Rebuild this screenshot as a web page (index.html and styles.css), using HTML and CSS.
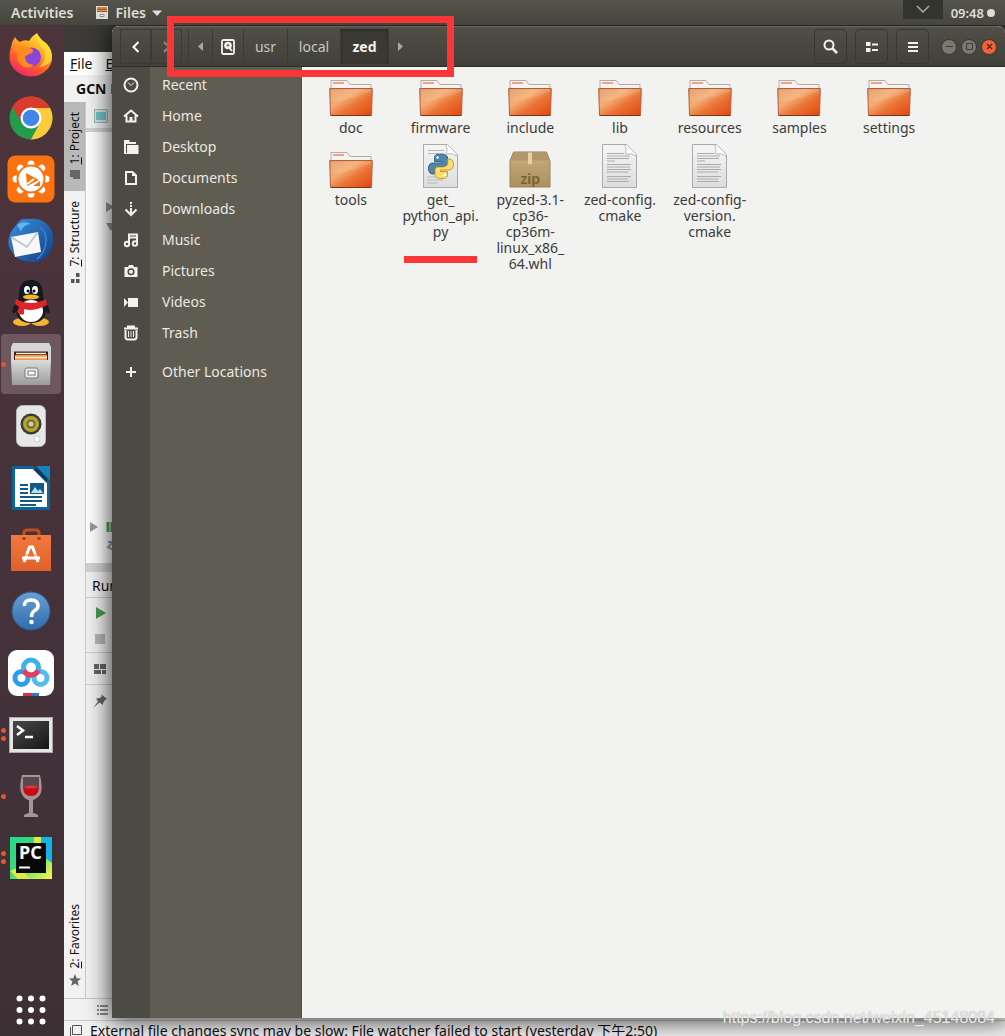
FILE: index.html
```html
<!DOCTYPE html>
<html lang="en">
<head>
<meta charset="utf-8">
<title>Files</title>
<link rel="stylesheet" href="styles.css">
</head>
<body>
<svg width="0" height="0" class="defs" aria-hidden="true">
  <defs>
    <linearGradient id="fold" x1="0" y1="0" x2="1" y2="1"><stop offset="0" stop-color="#e3935f"/><stop offset=".35" stop-color="#f3ad72"/><stop offset=".6" stop-color="#ea7335"/><stop offset="1" stop-color="#e2460f"/></linearGradient>
    <linearGradient id="page" x1="0" y1="0" x2="0" y2="1"><stop offset="0" stop-color="#f6f6f6"/><stop offset="1" stop-color="#dcdddd"/></linearGradient>
    <linearGradient id="box" x1="0" y1="0" x2="0" y2="1"><stop offset="0" stop-color="#c9ad7c"/><stop offset="1" stop-color="#ad905f"/></linearGradient>
    <linearGradient id="fox" x1=".8" y1="0" x2=".3" y2="1"><stop offset="0" stop-color="#fff04a"/><stop offset=".4" stop-color="#ffa51f"/><stop offset=".7" stop-color="#ff5a2c"/><stop offset="1" stop-color="#f0256c"/></linearGradient>
    <linearGradient id="bird" x1="0" y1="0" x2="1" y2="1"><stop offset="0" stop-color="#3a90dd"/><stop offset="1" stop-color="#123d84"/></linearGradient>
    <linearGradient id="metal" x1="0" y1="0" x2="0" y2="1"><stop offset="0" stop-color="#dcdcdc"/><stop offset="1" stop-color="#9b9b9b"/></linearGradient>
    <linearGradient id="bag" x1="0" y1="0" x2="0" y2="1"><stop offset="0" stop-color="#f07a40"/><stop offset="1" stop-color="#e0602a"/></linearGradient>
    <linearGradient id="help" x1="0" y1="0" x2="0" y2="1"><stop offset="0" stop-color="#6aa0d6"/><stop offset="1" stop-color="#2f6cab"/></linearGradient>
    <linearGradient id="term" x1="0" y1="0" x2="1" y2="1"><stop offset="0" stop-color="#4a4a4a"/><stop offset="1" stop-color="#161616"/></linearGradient>
    <linearGradient id="pc" x1="0" y1="0" x2="1" y2="1"><stop offset="0" stop-color="#21d789"/><stop offset=".45" stop-color="#3fd87c"/><stop offset="1" stop-color="#fcf84a"/></linearGradient>
    <symbol id="folder" viewBox="0 0 44 44">
      <path d="M2 14V8.500H18l3 4H42v6H2z" fill="#f5f3f1" stroke="#b9aaa4"/>
      <path d="M4 11H15" stroke="#e8896a" stroke-width="1.500"/>
      <path d="M.7 16.500H43.300L42.500 43.500H1.500z" fill="url(#fold)" stroke="#b06040"/>
      <path d="M2 30Q24 27 42.500 19V17.500H2z" fill="#fff" opacity=".12"/>
      <path d="M2 43.500H42" stroke="#7a3518"/>
    </symbol>
    <symbol id="doc" viewBox="0 0 44 44">
      <path d="M4.500.5H28L38.500 11V43.500H4.500z" fill="url(#page)" stroke="#aaa"/>
      <path d="M27 1Q29 6 27.500 10Q33 8.500 38 12L38.500 10.500L28.500.5z" fill="#fff" stroke="#aaa" stroke-width=".8"/>
      <path d="M9 9.500H26M9 12H32M9 14.500H31M9 17H17M9 20.500H33M9 23H32M9 25.500H33M9 28H30M9 32.500H33M9 35H30M9 37.500H31" stroke="#aaabab" stroke-width="1.200"/>
    </symbol>
    <symbol id="python" viewBox="0 0 44 44">
      <path d="M4.500.5H28L38.500 11V43.500H4.500z" fill="url(#page)" stroke="#aaa"/>
      <path d="M27 1Q29 6 27.500 10Q33 8.500 38 12L38.500 10.500L28.500.5z" fill="#fff" stroke="#aaa" stroke-width=".8"/>
      <path d="M9 6.500H25M9 9.500H19M8 33H19M8 36H24M8 39H19" stroke="#bbb"/>
      <g transform="translate(-1)">
      <path d="M22.500 10C17 10 16.500 12 16.500 14V17.500H23.500V19H14.500C11.500 19 10.500 22 10.500 24.500C10.500 28 12 30 14.500 30H16.500V26.500C16.500 24 18.500 22.500 21 22.500H26.500C28.500 22.500 29.500 21 29.500 19V14C29.500 11 27 10 22.500 10z" fill="#4f86ad" stroke="#35627f"/>
      <path d="M23.500 34.500C29 34.500 29.500 32 29.500 30.500V27.500H22.500V26H31.500C34.500 26 35.500 23 35.500 20.500C35.500 17 34 15 31.500 15H29.800V19C29.800 21.500 27.500 23 25 23H20C18 23 17 24.500 17 26.500V31C17 33.500 19.500 34.500 23.500 34.500z" fill="#fbdf6c" stroke="#c29b30"/>
      <circle cx="19.500" cy="13.500" r="1.200" fill="#fff"/><circle cx="26.500" cy="31" r="1.200" fill="#fff"/>
      </g>
    </symbol>
    <symbol id="zip" viewBox="0 0 44 44">
      <path d="M5.500 8H38.500L42 17V43H2V17z" fill="url(#box)" stroke="#9c8154"/>
      <path d="M2.500 16.500H41.500L38.500 8.500H5.500z" fill="#b3976a"/>
      <path d="M20 8.500H24V20.500L22 19.500L20 20.500z" fill="#e3d2ae"/>
    </symbol>
  </defs>
</svg>

<div class="screen">
  <header class="topbar">
    <button class="top-item activities">Activities</button>
    <button class="top-item app-menu">
      <svg width="14" height="15" viewBox="0 0 14 15"><path d="M1 1H13V14H1z" fill="#ddd"/><path d="M2 2H12V7H2z" fill="#6b3a1d"/><path d="M2 3H12M2 5.500H12" stroke="#f0a050" stroke-width="1.500"/><path d="M5 9.500H9V11.500H5z" fill="#fff" stroke="#888"/></svg>
      Files
      <svg width="10" height="6" viewBox="0 0 10 6"><path d="M0 .5H10L5 6z" fill="#ddd"/></svg>
    </button>
    <div class="clock">09:48 <i class="status-dot"></i></div>
  </header>

  <div class="workspace">
    <nav class="dock" aria-label="Dock">
      <ul>
        <li><svg width="46" height="46" viewBox="0 0 46 46"><path d="M3 14Q4 8 7 4Q9 8 12 9Q16 6 21 8Q24 3 29 0Q32 7 38 10Q45 17 44 27A21.500 20 0 0 1 1.500 26Q1 20 3 14z" fill="url(#fox)"/><circle cx="23.500" cy="24" r="9.500" fill="#8a45d8"/><path d="M5 15Q13 11 22 15Q27 17 24 20Q18 22 17 24Q17 31 26 32Q20 37 13 32Q7 27 10 20z" fill="#ff8a20"/><path d="M29 1Q30 12 36 17Q39 28 31 34Q44 32 44 23Q43 13 35 8z" fill="#ffe034" opacity=".75"/></svg></li>
        <li><svg width="44" height="44" viewBox="0 0 44 44"><circle cx="22" cy="22" r="21.500" fill="#249b4d"/><path d="M22 22L3.400 11.300A21.500 21.500 0 0 1 40.600 11.300L41 12H22z" fill="#d93b2d"/><path d="M22 12H41A21.500 21.500 0 0 1 22 43.500L31 27z" fill="#fdcb3a"/><path d="M3.400 11.300L13.400 27 22 12H41A21.500 21.500 0 0 0 3.400 11.300z" fill="#d93b2d"/><circle cx="22" cy="22" r="10.500" fill="#fff"/><circle cx="22" cy="22" r="8.300" fill="#4285e8"/></svg></li>
        <li><svg width="48" height="48" viewBox="0 0 48 48"><rect x=".5" y=".5" width="47" height="47" rx="8" fill="#fb7210"/><g stroke="#fff" stroke-width="7" stroke-linecap="round"><path d="M24 9V39M9 24H39M13.300 13.300L34.700 34.700M34.700 13.300L13.300 34.700"/></g><circle cx="24" cy="24" r="14.500" fill="#fb7210"/><circle cx="24" cy="24" r="12.500" fill="#fff"/><path d="M19 18L32 25L20 31zM26 31L33 26V31z" fill="#fb7210"/><path d="M20 29L27 24" stroke="#fff" stroke-width="2"/></svg></li>
        <li><svg width="48" height="48" viewBox="0 0 48 48"><path d="M10 7Q13 1 22 2Q38 0 45 14Q49 28 41 38Q34 46 25 45Q11 45 4 34Q-1 27 3 17Q6 11 10 7z" fill="url(#bird)"/><path d="M10 8Q16 3 24 7Q17 7 14 14z" fill="#61b6f2"/><path d="M4 20L31 15L34 35L8 40z" fill="#f6f8fa"/><path d="M4 20L20 30L31 15" fill="none" stroke="#b9c0c8" stroke-width="1.500"/><path d="M33 10Q40 16 39 25Q38 36 30 42" fill="none" stroke="#3a86c8" stroke-width="1.500"/></svg></li>
        <li><svg width="42" height="48" viewBox="0 0 42 48"><ellipse cx="12" cy="43" rx="9" ry="4" fill="#f5b52d"/><ellipse cx="30" cy="43" rx="9" ry="4" fill="#f5b52d"/><path d="M21 1C10 1 9 10 9 18L3 29Q1 37 6 33Q8 44 21 44T36 33Q41 37 39 29L33 18C33 10 32 1 21 1z" fill="#161a20"/><ellipse cx="21" cy="32" rx="12" ry="11" fill="#fff"/><path d="M6 20Q21 28 36 20L37 26Q24 33 14 30V35Q10 37 7 33L9 28L5 25z" fill="#df2528"/><ellipse cx="17" cy="11" rx="3" ry="4" fill="#fff"/><ellipse cx="25" cy="11" rx="3" ry="4" fill="#fff"/><circle cx="18" cy="12" r="1.500"/><circle cx="24" cy="12" r="1.500"/><ellipse cx="21" cy="18" rx="8" ry="2.500" fill="#f5b52d"/></svg></li>
        <li class="running active"><svg width="42" height="44" viewBox="0 0 42 44"><path d="M3 1H39L41 5V19H1V5z" fill="#d5d5d5"/><path d="M4 9.500H38V19H4z" fill="#3c2216"/><path d="M5 13H37V19H5z" fill="#f29a4c"/><path d="M6 11.500H36M5 15.500H37" stroke="#ffe8cc" stroke-width="1.500"/><path d="M1 18H41L40 43H2z" fill="url(#metal)"/><rect x="15" y="26" width="13" height="10" rx="2" fill="#eee" stroke="#777"/><rect x="18" y="29" width="7" height="4" fill="#fff" stroke="#777"/></svg></li>
        <li><svg width="30" height="42" viewBox="0 0 30 42"><rect x=".5" y=".5" width="29" height="41" rx="6" fill="#e6e7e7" stroke="#bbb"/><circle cx="15" cy="19" r="10.500" fill="#3b3c3a"/><circle cx="15" cy="19" r="8" fill="#b5a52d"/><circle cx="15" cy="19" r="4.500" fill="#716b28"/><circle cx="15" cy="19" r="2.500" fill="#d7c6c6"/><circle cx="21" cy="34" r="3" fill="#fafafa" stroke="#ccc"/></svg></li>
        <li><svg width="40" height="46" viewBox="0 0 40 46"><path d="M1 1H22L39 17V45H1z" fill="#0c649d"/><path d="M25 1H39V16z" fill="#1482bd"/><path d="M4 4H22L36 18V42H4z" fill="#fff"/><path d="M22 4L36 18V13L27 4z" fill="#093f66"/><path d="M9 20H17M9 24H17M9 28H17M9 32H31M9 36H31M9 40H25" stroke="#145a85" stroke-width="2"/><rect x="19" y="18" width="14" height="11" fill="#145a85"/><path d="M20 28L24 22L27 26L29 24L32 28z" fill="#b8e2f2"/></svg></li>
        <li><svg width="42" height="44" viewBox="0 0 42 44"><path d="M14 9V5Q14 2 17 2H26Q29 2 29 5V9" fill="none" stroke="#c24d20" stroke-width="3"/><path d="M1 7H41V43H1z" fill="url(#bag)"/><path d="M14 9V12M29 9V12" stroke="#a73f18" stroke-width="3"/><path d="M14 34L19.500 19H22.500L28 34M12 30H30" fill="none" stroke="#fff" stroke-width="3"/><path d="M12 27H30" stroke="#ea6f38"/></svg></li>
        <li><svg width="40" height="40" viewBox="0 0 40 40"><circle cx="20" cy="20" r="19" fill="url(#help)" stroke="#315c8c"/><path d="M13.500 15Q13 9 20 9Q27 9 27 15Q27 18 23 20Q20.500 22 20.500 26" fill="none" stroke="#fff" stroke-width="3.500"/><circle cx="20.500" cy="31" r="2.300" fill="#fff"/></svg></li>
        <li><svg width="48" height="48" viewBox="0 0 48 48"><rect x="1" y="1" width="46" height="46" rx="9" fill="#fff"/><g fill="none" stroke-width="5"><circle cx="14.500" cy="29" r="6.500" stroke="#2a9df0"/><circle cx="33.500" cy="29" r="6.500" stroke="#55b9f3"/><circle cx="24" cy="18.500" r="7.500" stroke="#3db0ea"/><path d="M17 21.500Q19 26 24 26T31 21.500" stroke="#e93b55"/></g><path d="M16 44H24V47H16z" fill="#df2c44"/><path d="M24 44H32V47H24z" fill="#2a78d0"/></svg></li>
        <li class="running two"><svg width="44" height="36" viewBox="0 0 44 36"><rect x=".5" y=".5" width="43" height="35" fill="#e5e5e5" stroke="#aaa"/><rect x="4" y="4" width="36" height="28" fill="url(#term)"/><path d="M8 9L14 13.500L8 18M16 20H24" fill="none" stroke="#fff" stroke-width="2.500"/></svg></li>
        <li class="running"><svg width="26" height="46" viewBox="0 0 26 46"><path d="M4 2H22Q26 20 20 24Q17 27 15 27V40Q21 41 20 44H6Q5 41 11 40V27Q8 27 5 23Q0 17 4 2z" fill="#b5a6a9" opacity=".85"/><path d="M5 4H21V14H5z" fill="#5b484c"/><path d="M5 14H21Q21 23 13 23T5 14z" fill="#c50b15"/><path d="M5 14Q13 11 21 14Q13 17 5 14z" fill="#e6323a"/></svg></li>
        <li class="running two"><svg width="42" height="42" viewBox="0 0 42 42"><path d="M0 0H42V42H0z" fill="url(#pc)"/><path d="M30 0H42V26L34 20z" fill="#12b4ea"/><path d="M24 0H31V7H24zM0 34L10 30L20 42H8z" fill="#dcec45"/><path d="M6 6H36V36H6z" fill="#080808"/><path d="M9 30.500H20" stroke="#fff" stroke-width="2"/></svg><b class="pc-text">PC</b></li>
      </ul>
      <button class="show-apps" aria-label="Show Applications"><svg width="30" height="30" viewBox="0 0 30 30"><path d="M3.500 3.500h.01M15 3.500h.01M26.500 3.500h.01M3.500 15h.01M15 15h.01M26.500 15h.01M3.500 26.500h.01M15 26.500h.01M26.500 26.500h.01" stroke="#fff" stroke-width="6" stroke-linecap="round"/></svg></button>
    </nav>

    <main class="desktop">
      <section class="ide" aria-label="Editor">
        <div class="ide-title"></div>
        <div class="ide-menu"><span><u>F</u>ile</span><span><u>E</u>dit</span></div>
        <div class="ide-nav">GCN Model</div>
        <div class="ide-body">
          <div class="stripe">
            <button class="tab selected"><span><u>1</u>: Project</span><svg width="10" height="9" viewBox="0 0 10 9"><path d="M0 0H10V9H3V7H0z" fill="#666"/></svg></button>
            <button class="tab"><span><u>7</u>: Structure</span><svg width="10" height="10" viewBox="0 0 10 10"><path d="M6 0h3.500v4H6zM1 6h3.500v4H1zM6 6h3.500v4H6z" fill="#555"/></svg></button>
            <button class="tab last"><span><u>2</u>: Favorites</span><svg width="12" height="12" viewBox="0 0 12 12"><path d="M6 0L7.700 4.200 12 4.500 8.700 7.300 9.800 12 6 9.400 2.200 12 3.300 7.300 0 4.500 4.300 4.200z" fill="#666"/></svg></button>
          </div>
          <div class="panels">
            <div class="panel-head"><svg width="14" height="14" viewBox="0 0 14 14"><path d="M.5.5H13.500V13.500H.5z" fill="#d5e6ea" stroke="#a0b4ba"/><path d="M2 3H12V11H2z" fill="#73c4cf"/></svg></div>
            <div class="tree">
              <svg class="branches" width="8" height="30" viewBox="0 0 8 30"><path d="M0 0L8 5L0 10zM0 21H10L5 29z" fill="#999"/></svg>
              <svg class="libs" width="26" height="32" viewBox="0 0 26 32"><path d="M2 3L10 8L2 13z" fill="#999"/><path d="M20 3V13M24 3V13" stroke="#4da45a" stroke-width="3"/><path d="M20 23H25L20 28L25 31" fill="none" stroke="#8aa" stroke-width="2"/></svg>
            </div>
            <div class="splitter"></div>
            <div class="run">
              <div class="run-head">Run:</div>
              <div class="run-tools">
                <div><svg width="11" height="12" viewBox="0 0 11 12"><path d="M1 0L11 6L1 12z" fill="#499c54"/></svg></div>
                <div><svg width="10" height="10" viewBox="0 0 10 10"><path d="M0 0H10V10H0z" fill="#b8b8b8"/></svg></div>
                <div class="ruled"><svg width="12" height="10" viewBox="0 0 12 10"><path d="M0 0H5V5H0zM6 0H12V5H6zM0 6H7V10H0zM8 6H12V10H8z" fill="#666"/></svg></div>
                <div class="ruled"><svg width="14" height="14" viewBox="0 0 14 14"><path d="M8 0L14 5L12 6L10 9V11L6.500 8.500L0 14L5 7.500L3 4.500L7 4L9 2z" fill="#666"/></svg></div>
              </div>
            </div>
          </div>
        </div>
        <div class="ide-strip"><svg width="11" height="10" viewBox="0 0 11 10"><path d="M0 1H2M3 1H11M0 5H2M3 5H11M0 9H2M3 9H11" stroke="#666" stroke-width="1.500"/></svg></div>
        <div class="ide-status"><svg width="12" height="12" viewBox="0 0 12 12"><path d="M2.500.5H11.500V9.500H2.500zM.5 2V11.500H10" fill="none" stroke="#555"/></svg><span>External file changes sync may be slow: File watcher failed to start (yesterday 下午2:50)</span></div>
      </section>

      <section class="files" aria-label="Files">
        <header class="headerbar">
          <div class="nav-buttons">
            <button aria-label="Back"><svg width="9" height="14" viewBox="0 0 9 14"><path d="M7.500 2L2.500 7L7.500 12" fill="none" stroke="#fff" stroke-width="2"/></svg></button>
            <button aria-label="Forward" disabled><svg width="9" height="14" viewBox="0 0 9 14"><path d="M2 2L7 7L2 12" fill="none" stroke="#8d8b81" stroke-width="2"/></svg></button>
          </div>
          <div class="pathbar">
            <button class="step" aria-label="Scroll left"><svg width="5" height="9" viewBox="0 0 5 9"><path d="M5 0V9L0 4.500z" fill="#aaa89e"/></svg></button>
            <button class="disk" aria-label="Root"><svg width="14" height="16" viewBox="0 0 14 16"><rect x="1" y="1" width="12" height="14" rx="1.500" fill="none" stroke="#f2f1ec" stroke-width="1.800"/><circle cx="7" cy="6.500" r="3.800" fill="#f2f1ec"/><circle cx="7" cy="6.500" r="1.300" fill="#4d4b43"/><path d="M7 7L11 12" stroke="#f2f1ec" stroke-width="2"/></svg></button>
            <button class="usr">usr</button>
            <button class="local">local</button>
            <button class="current">zed</button>
            <button class="step" aria-label="Scroll right"><svg width="5" height="9" viewBox="0 0 5 9"><path d="M0 0V9L5 4.500z" fill="#aaa89e"/></svg></button>
          </div>
          <div class="tools">
            <button aria-label="Search"><svg width="15" height="15" viewBox="0 0 15 15"><circle cx="6" cy="6" r="4.500" fill="none" stroke="#f2f1ec" stroke-width="2"/><path d="M9.500 9.500L14 14" stroke="#f2f1ec" stroke-width="2.500"/></svg></button>
            <button aria-label="View"><svg width="12" height="10" viewBox="0 0 12 10"><path d="M0 0H4.500V4H0zM0 6H4.500V10H0zM6 1.500H12V3.500H6zM6 7H12V9H6z" fill="#f2f1ec"/></svg></button>
            <button aria-label="Menu"><svg width="10" height="10" viewBox="0 0 10 10"><path d="M0 1H10M0 5H10M0 9H10" stroke="#f2f1ec" stroke-width="2"/></svg></button>
          </div>
          <div class="window-controls">
            <button aria-label="Minimize"><svg width="9" height="9" viewBox="0 0 9 9"><path d="M1 4.500H8" stroke="#3c3b37"/></svg></button>
            <button aria-label="Maximize"><svg width="9" height="9" viewBox="0 0 9 9"><path d="M1.500 1.500H7.500V7.500H1.500z" fill="none" stroke="#3c3b37"/></svg></button>
            <button class="close" aria-label="Close"><svg width="9" height="9" viewBox="0 0 9 9"><path d="M2 2L7 7M7 2L2 7" stroke="#5d2110" stroke-width="1.300"/></svg></button>
          </div>
        </header>
        <div class="files-body">
          <nav class="places" aria-label="Places">
            <a href="#recent"><i><svg width="16" height="16" viewBox="0 0 16 16"><circle cx="8" cy="8" r="6.500" class="line"/><path d="M5 5.500L8 8.500L11 5.500" class="line thin"/></svg></i>Recent</a>
            <a href="#home"><i><svg width="16" height="16" viewBox="0 0 16 16"><path d="M1 8.500L8 2.500L15 8.500M3.500 7.500V13.500H12.500V7.500" class="line"/><path d="M6.500 9H9.500V14H6.500z" class="solid"/></svg></i>Home</a>
            <a href="#desktop"><i><svg width="16" height="16" viewBox="0 0 16 16"><path d="M1 1H6.500V3H13V5H3V15H1z" class="solid"/><path d="M4 6H15.500V15H2V14H4z" class="solid"/></svg></i>Desktop</a>
            <a href="#documents"><i><svg width="16" height="16" viewBox="0 0 16 16"><path d="M3 2H9.500L13 5.500V14H3z" class="line"/><path d="M9 2V6H13z" class="solid"/></svg></i>Documents</a>
            <a href="#downloads"><i><svg width="16" height="16" viewBox="0 0 16 16"><path d="M8 1V8" class="line" stroke-dasharray="2 1"/><path d="M8 8V12M2.500 8.500L8 14L13.500 8.500" class="line"/></svg></i>Downloads</a>
            <a href="#music"><i><svg width="16" height="16" viewBox="0 0 16 16"><path d="M6 12V2.500H14V11M6 5.500H14" class="line"/><circle cx="4" cy="12" r="2.200" class="line"/><circle cx="12" cy="11.500" r="2.200" class="line"/></svg></i>Music</a>
            <a href="#pictures"><i><svg width="16" height="16" viewBox="0 0 16 16"><path d="M1.500 4H5L6 2H10L11 4H14.500V14H1.500z" class="solid"/><circle cx="8" cy="8.800" r="2.800" fill="none" stroke="#4c4b43" stroke-width="1.500"/></svg></i>Pictures</a>
            <a href="#videos"><i><svg width="16" height="16" viewBox="0 0 16 16"><path d="M5 4H15V13H5zM1 4L5 8.500L1 13z" class="solid"/></svg></i>Videos</a>
            <a href="#trash"><i><svg width="16" height="16" viewBox="0 0 16 16"><path d="M1 3.500H15M4 1.500H12M2.500 5V12Q2.500 14.500 5 14.500H11Q13.500 14.500 13.500 12V5" class="line"/><path d="M5.500 6V12M8 6V12M10.500 6V12" class="line thin"/></svg></i>Trash</a>
            <a href="#other" class="other"><i><svg width="16" height="16" viewBox="0 0 16 16"><path d="M8 3V13M3 8H13" class="line"/></svg></i>Other Locations</a>
          </nav>
          <ul class="grid">
            <li><svg class="icon"><use href="#folder"/></svg><span>doc</span></li>
            <li><svg class="icon"><use href="#folder"/></svg><span>firmware</span></li>
            <li><svg class="icon"><use href="#folder"/></svg><span>include</span></li>
            <li><svg class="icon"><use href="#folder"/></svg><span>lib</span></li>
            <li><svg class="icon"><use href="#folder"/></svg><span>resources</span></li>
            <li><svg class="icon"><use href="#folder"/></svg><span>samples</span></li>
            <li><svg class="icon"><use href="#folder"/></svg><span>settings</span></li>
            <li><svg class="icon"><use href="#folder"/></svg><span>tools</span></li>
            <li class="marked"><svg class="icon"><use href="#python"/></svg><span>get_<br>python_api.<br>py</span></li>
            <li class="archive"><svg class="icon"><use href="#zip"/></svg><b class="badge">zip</b><span>pyzed-3.1-<br>cp36-<br>cp36m-<br>linux_x86_<br>64.whl</span></li>
            <li><svg class="icon"><use href="#doc"/></svg><span>zed-config.<br>cmake</span></li>
            <li><svg class="icon"><use href="#doc"/></svg><span>zed-config-<br>version.<br>cmake</span></li>
          </ul>
        </div>
      </section>
    </main>
  </div>

  <div class="drawer-handle"><svg width="14" height="8" viewBox="0 0 14 8"><path d="M1 1L7 7L13 1" fill="none" stroke="#aaa" stroke-width="1.500"/></svg></div>
  <div class="highlight"></div>
  <div class="watermark">https://blog.csdn.net/weixin_45148084</div>
</div>
</body>
</html>
```
FILE: styles.css
```css
* { box-sizing: border-box; }
body {
  margin: 0;
  font: 14px/16px "Noto Sans", "Noto Sans CJK SC", sans-serif;
  color: #3b3b3b;
}
button {
  padding: 0;
  border: 0;
  background: none;
  color: inherit;
  font: inherit;
}
svg { display: block; flex: none; }
ul { margin: 0; padding: 0; list-style: none; }
.defs { position: absolute; }

.screen {
  position: relative;
  display: flex;
  flex-direction: column;
  height: 100vh;
  overflow: hidden;
}

/* Top bar */
.topbar {
  display: flex;
  align-items: center;
  height: 25px;
  padding: 0 10px 0 11px;
  background: linear-gradient(#55544a, #47463e);
  color: #dedcd4;
  font-weight: 600;
}
.app-menu { display: flex; align-items: center; gap: 6px; margin-left: 22px; }
.clock { display: flex; align-items: center; gap: 3px; margin-left: auto; font-size: 13px; }
.status-dot { width: 8px; height: 8px; border-radius: 50%; background: #dedcd4; }
.drawer-handle {
  position: absolute;
  top: 0;
  right: 62px;
  display: flex;
  justify-content: center;
  width: 40px;
  height: 19px;
  padding-top: 5px;
  background: #34342f;
}

.workspace { display: flex; flex: 1; min-height: 0; }

/* Dock */
.dock {
  display: flex;
  flex-direction: column;
  width: 64px;
  padding-top: 1px;
  background: linear-gradient(#4e343b, #44323a 60%, #3d3035);
}
.dock ul {
  display: flex;
  flex: 1;
  flex-direction: column;
  justify-content: space-between;
}
.dock li {
  position: relative;
  display: flex;
  align-items: center;
  justify-content: center;
  width: 60px;
  height: 60px;
  margin-left: 1px;
}
.dock .active { border-radius: 4px; background: #6d585f; }
.running::before {
  content: "";
  position: absolute;
  left: 0;
  width: 5px;
  height: 5px;
  border-radius: 50%;
  background: #e4552b;
}
.two::before { margin-bottom: 8px; box-shadow: 0 8px #e4552b; }
.pc-text {
  position: absolute;
  left: 18px;
  top: 16px;
  color: #fff;
  font-size: 18px;
  line-height: 16px;
}
.show-apps {
  display: flex;
  align-items: flex-end;
  justify-content: center;
  height: 148px;
  padding: 0 2px 11px 0;
}

/* Editor window, behind */
.desktop { position: relative; flex: 1; min-width: 0; overflow: hidden; background: #3c3b37; }
.ide {
  position: absolute;
  inset: 0 0 -4px;
  display: flex;
  flex-direction: column;
  background: #f2f2f2;
  color: #111;
}
.ide-title { height: 27px; background: #3c3b37; }
.ide-menu { display: flex; align-items: center; gap: 13px; height: 23px; padding-left: 6px; background: #fff; }
.ide-nav { height: 27px; padding: 6px 12px; font-weight: 700; }
.ide-body { display: flex; flex: 1; min-height: 0; }
.stripe {
  display: flex;
  flex-direction: column;
  width: 22px;
  border-right: 1px solid #c9c9c9;
  font-size: 12px;
}
.tab {
  display: flex;
  flex-direction: column;
  align-items: center;
  gap: 6px;
  padding: 10px 0 12px;
}
.tab span { writing-mode: vertical-rl; transform: rotate(180deg); }
.selected { background: #b9b9b9; }
.last { margin-top: auto; }
.panels { display: flex; flex: 1; flex-direction: column; background: #fff; }
.panel-head { height: 30px; padding: 7px 8px; border-bottom: 4px solid #d3d3d3; background: #f2f2f2; }
.tree { display: flex; flex: 1; flex-direction: column; justify-content: space-between; padding: 70px 0 12px; }
.branches { margin-left: 20px; }
.libs { margin-left: 2px; }
.splitter { height: 9px; background: #d3d3d3; }
.run { height: 426px; background: #f2f2f2; }
.run-head { height: 26px; padding: 6px; border-bottom: 1px solid #ccc; }
.run-tools { width: 28px; padding-top: 2px; }
.run-tools div { display: flex; align-items: center; justify-content: center; height: 26px; }
.run-tools .ruled { height: 32px; border-top: 1px solid #ccc; }

.ide-strip { height: 22px; padding: 6px 33px; border-top: 1px solid #c9c9c9; }
.ide-status {
  display: flex;
  align-items: center;
  gap: 8px;
  height: 20px;
  padding-left: 6px;
  border-top: 1px solid #c9c9c9;
  white-space: nowrap;
}

/* Files window, in front */
.files {
  position: absolute;
  inset: 1px 0 18px 48px;
  display: flex;
  flex-direction: column;
  border-radius: 7px 7px 0 0;
  box-shadow: 0 1px 24px 2px rgba(0, 0, 0, .75);
  overflow: hidden;
  background: #f2f2f0;
}
.headerbar {
  display: flex;
  align-items: center;
  height: 41px;
  padding: 0 8px;
  border-top: 1px solid #68665c;
  border-bottom: 1px solid #2d2c28;
  background: linear-gradient(#515047, #403f39);
  color: #c9c7be;
}
.headerbar button { display: flex; align-items: center; justify-content: center; height: 35px; }
.nav-buttons { display: flex; }
.nav-buttons button { width: 31px; border: 1px solid #3b3a34; }
.pathbar { display: flex; margin-left: 6px; }
.pathbar button { border-left: 1px solid #3b3a34; }
.step { width: 24px; }
.disk { width: 31px; }
.usr { width: 44px; }
.local { width: 53px; }
.pathbar .current {
  width: 48px;
  background: #3a3933;
  box-shadow: inset 0 1px 3px #26251f;
  color: #f2f1ec;
  font-weight: 700;
}
.tools { display: flex; gap: 8px; margin-left: auto; }
.tools button { width: 33px; border: 1px solid #39382f; border-radius: 4px; }
.window-controls { display: flex; gap: 4px; margin-left: 12px; }
.window-controls button { width: 16px; height: 16px; border: 1px solid #38372f; border-radius: 50%; background: #7a786f; }
.window-controls .close { background: #f1633a; }

.files-body { display: flex; flex: 1; min-height: 0; }
.places {
  width: 190px;
  padding-top: 2px;
  border-right: 1px solid #504f46;
  background: linear-gradient(90deg, #4c4b43 38px, #5f5d52 38px);
}
.places a {
  display: flex;
  align-items: center;
  gap: 12px;
  height: 31px;
  color: #eae8e1;
  text-decoration: none;
}
.places i { display: flex; justify-content: center; width: 38px; }
.places .other { margin-top: 8px; }
.line { fill: none; stroke: #f2f1ec; stroke-width: 2; }
.line.thin { stroke-width: 1; }
.solid { fill: #f2f1ec; }

.grid {
  display: grid;
  flex: 1;
  grid-template-columns: repeat(7, 1fr);
  align-content: start;
  gap: 8px 0;
  padding: 5px 71px 0 4px;
  text-align: center;
}
.grid li {
  position: relative;
  display: flex;
  flex-direction: column;
  align-items: center;
  gap: 4px;
}
.icon { width: 44px; height: 44px; }
.badge { position: absolute; top: 27px; color: #7a5f35; font-weight: 600; }

/* Hand-drawn marks and overlay text */
.marked::after {
  content: "";
  position: absolute;
  top: 112px;
  width: 73px;
  height: 7px;
  background: #fc3636;
}
.highlight {
  position: absolute;
  left: 167px;
  top: 16px;
  width: 287px;
  height: 61px;
  border: 7px solid #fc3636;
}
.watermark {
  position: absolute;
  right: 10px;
  bottom: 10px;
  color: #e8e8e8;
  font: 16px/16px "Liberation Sans", sans-serif;
  text-shadow: 0 0 1px #999;
}
```
